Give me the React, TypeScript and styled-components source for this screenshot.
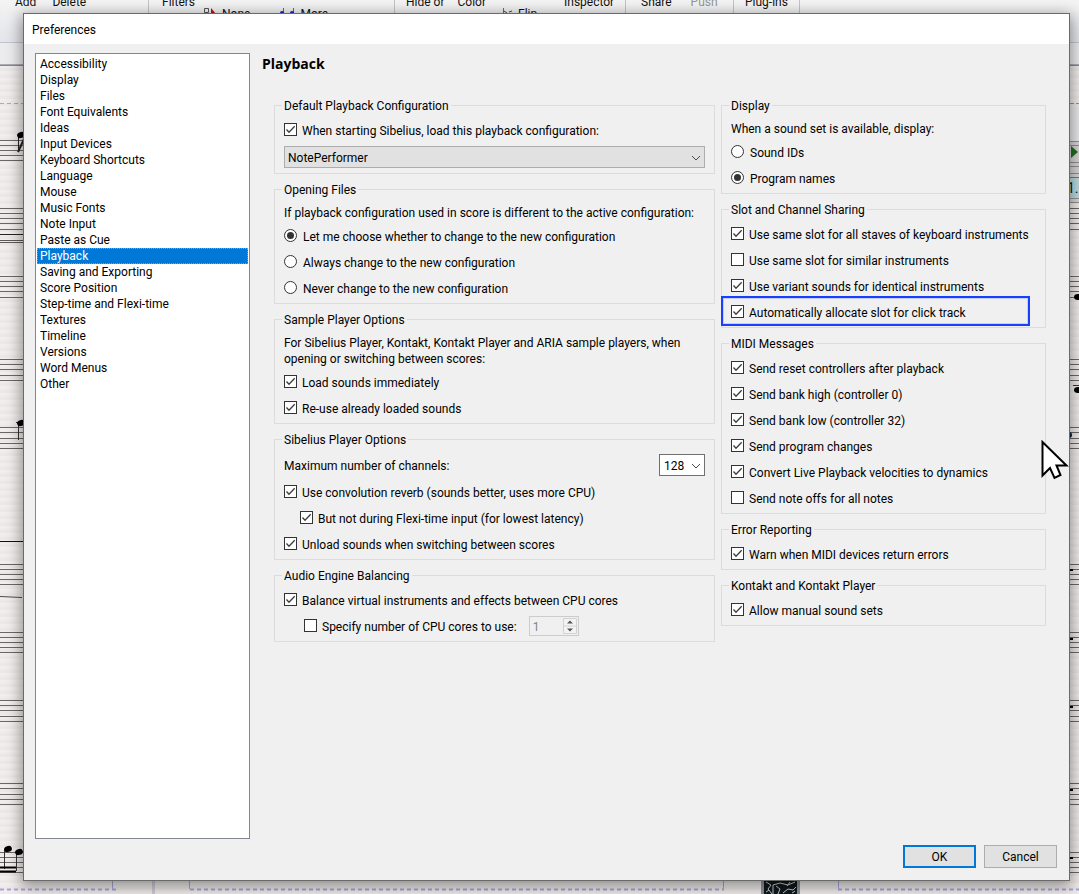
import React, { useId, useState } from 'react';
import styled, { createGlobalStyle, css } from 'styled-components';

const GlobalStyle = createGlobalStyle`
  *, *::before, *::after { box-sizing: border-box; }
  html, body { margin: 0; padding: 0; }
  body, button, input, select {
    font-family: Roboto, "Liberation Sans", sans-serif;
    font-size: 12px;
    line-height: 16px;
    color: #000;
  }
`;

/* ---------- Score window behind the dialog ---------- */

const Desktop = styled.div`
  position: relative;
  display: flex;
  min-height: 100vh;
  padding: 13px 9px 13px 23px;
  overflow: hidden;
`;

const ScoreWindow = styled.div`
  position: absolute;
  inset: 0;
  display: flex;
  flex-direction: column;
`;

const Ribbon = styled.div`
  display: flex;
  height: 43px;
  overflow: hidden;
  background: linear-gradient(#f4f4f4, #e4e5ea);
  border-bottom: 1px solid #c4c5cc;
`;

const RibbonGroup = styled.div<{ $width: number; $indent: number }>`
  flex: none;
  width: ${p => p.$width}px;
  padding-left: ${p => p.$indent}px;
  border-right: 1px solid #c3c3c6;
`;

const RibbonRow = styled.div<{ $gap: number; $indent?: number; $first?: boolean }>`
  display: flex;
  gap: ${p => p.$gap}px;
  padding-left: ${p => p.$indent ?? 0}px;
  margin-top: ${p => (p.$first ? -4 : 0)}px;
  height: 12px;
  line-height: 12px;
  white-space: nowrap;
`;

const RibbonItem = styled.span<{ $disabled?: boolean; $apart?: boolean }>`
  display: flex;
  gap: 5px;
  margin-left: ${p => (p.$apart ? 65 : 0)}px;
  color: ${p => (p.$disabled ? '#969696' : '#111')};
`;

const DocumentBar = styled.div`
  height: 22px;
  background: #ececee;
  border-bottom: 1px solid #aaaab4;
`;

const Paper = styled.div`
  position: relative;
  flex: 1;
  background: repeating-linear-gradient(#f0eceb 0 2px, #ece8e7 2px 5px, #f1eeed 5px 7px);
  border-top: 1px solid #8886a8;
`;

const PaperLayer = styled.svg<{ $side?: 'left' | 'right' }>`
  position: absolute;
  top: -66px;
  ${p => (p.$side === 'right' ? css`right: 0;` : css`left: 0;`)}
  width: ${p => (p.$side ? '30px' : '100%')};
  height: 894px;
`;

const STAVES = [
  [140, 145, 150, 155, 160],
  [208, 213, 218, 223, 229],
  [276, 281, 286, 291, 297],
  [359, 364, 369, 375, 380],
  [427, 432, 438, 443, 448],
  [564, 569, 574, 579, 584],
  [632, 637, 642, 647, 652],
  [700, 705, 710, 716, 721],
  [783, 788, 794, 799, 804],
  [852, 857, 862, 867, 872],
];

function Score() {
  return (
    <Paper aria-hidden="true">
      <PaperLayer>
        {STAVES.flat().map(y => (
          <rect key={y} x="0" y={y} width="100%" height="1" fill="#6a6867" />
        ))}
        <g stroke="#a6a6dc" strokeWidth="1" strokeDasharray="4 3" fill="none">
          <path d="M0 103.5H23" />
          <path d="M0 889.5H116" strokeWidth="2" />
          <path d="M190 889.5H724" strokeWidth="2" />
          <path d="M838 889.5H1100" strokeWidth="2" />
        </g>
        <path d="M112.500 881v8M189.500 881v8M723.500 881v8M838.500 881v8" stroke="#a6a6dc" />
        <rect x="152" y="880" width="3" height="14" fill="#cfcbd8" />
        <rect x="761" y="880" width="39" height="14" fill="#8d959a" />
        <rect x="764" y="880" width="33" height="14" fill="#10171b" />
        <path
          d="M766 882l5 3-3 4 4 5M773 894v-9l7-2 8 2 7-3M776 886l4 3-2 5M783 893l5-4 5 1 3-3M790 882l-3 4M766 892l3-2M792 893l3-2"
          fill="none"
          stroke="#c4ced2"
        />
      </PaperLayer>
      <PaperLayer $side="left">
        <path d="M0 234.500H24" stroke="#222" />
        <path d="M0 240.500H24M0 242.500H24" stroke="#5c5a59" />
        <path d="M18.500 136v15" stroke="#222" />
        <ellipse cx="21" cy="135" rx="4" ry="3" fill="#000" transform="rotate(-20 21 135)" />
        <path d="M18 152l6-13" stroke="#222" strokeWidth="2" />
        <path d="M18.500 423v17M16 422.500h8" stroke="#333" />
        <ellipse cx="21" cy="423" rx="4" ry="3" fill="#000" transform="rotate(-20 21 423)" />
        <path d="M0 541.500H24" stroke="#111" />
        <path d="M0 596.500L22 597.500" stroke="#4a4a48" />
        <path d="M4.500 850v19M16.500 853v18" stroke="#333" />
        <ellipse cx="8" cy="849" rx="4" ry="3" fill="#000" transform="rotate(-20 8 849)" />
        <ellipse cx="19" cy="852" rx="4" ry="3" fill="#000" transform="rotate(-20 19 852)" />
        <path d="M0 867.500H16M0 871.500H16" stroke="#000" strokeWidth="2" />
      </PaperLayer>
      <PaperLayer $side="right">
        <path d="M20 103.500h5M27 103.500h3" stroke="#8c8cc4" />
        <rect x="20" y="107" width="10" height="34" fill="#e9e9eb" />
        <rect x="20" y="141" width="10" height="62" fill="#d8d5d5" />
        <path d="M20 141.500h10M20 145.500h10M20 162.500h10M20 166.500h10M20 173.500h10M20 198.500h10M20 202.500h10" stroke="#929090" />
        <path d="M22 146l7 6-7 6z" fill="#22701f" />
        <rect x="20" y="178" width="10" height="19" fill="#bcdbe0" />
        <path d="M20 177.500h10" stroke="#777" />
        <text x="18" y="193" fontSize="14" fill="#111">1.</text>
        <ellipse cx="29" cy="297" rx="4" ry="3" fill="#000" />
        <path d="M24 385.500h6" stroke="#333" />
        <ellipse cx="29" cy="390" rx="4" ry="3" fill="#000" />
        <ellipse cx="20" cy="435" rx="3" ry="3" fill="#0d2748" />
        <path d="M20 570h4M20 639h4M20 707h4M20 790h4M20 858h4" stroke="#000" strokeWidth="2" />
      </PaperLayer>
    </Paper>
  );
}

function Background() {
  return (
    <ScoreWindow aria-hidden="true">
      <Ribbon>
        <RibbonGroup $width={149} $indent={15}>
          <RibbonRow $gap={16} $first>
            <RibbonItem>Add</RibbonItem>
            <RibbonItem>Delete</RibbonItem>
          </RibbonRow>
        </RibbonGroup>
        <RibbonGroup $width={246} $indent={13}>
          <RibbonRow $gap={0} $first>
            <RibbonItem>Filters</RibbonItem>
          </RibbonRow>
          <RibbonRow $gap={30} $indent={41}>
            <RibbonItem>
              <svg width="14" height="12">
                <path d="M1.500 .5h4v4h-4z" fill="none" stroke="#555" />
                <path d="M8 0l5 6H8z" fill="#b3151c" />
              </svg>
              None
            </RibbonItem>
            <RibbonItem>
              <svg width="15" height="12">
                <path d="M3.500 0v5M13.500 0v5" stroke="#7a5a9c" />
                <circle cx="2" cy="5" r="2" fill="#2020c8" />
                <circle cx="12" cy="5" r="2" fill="#2020c8" />
              </svg>
              More
            </RibbonItem>
          </RibbonRow>
        </RibbonGroup>
        <RibbonGroup $width={231} $indent={11}>
          <RibbonRow $gap={13} $first>
            <RibbonItem>Hide or</RibbonItem>
            <RibbonItem>Color</RibbonItem>
            <RibbonItem $apart>Inspector</RibbonItem>
          </RibbonRow>
          <RibbonRow $gap={0} $indent={96}>
            <RibbonItem>
              <svg width="11" height="12">
                <path d="M1.500 0v8" stroke="#7a5a9c" />
                <path d="M2 3l3 2M7 4l3-1" stroke="#444" />
              </svg>
              Flip
            </RibbonItem>
          </RibbonRow>
        </RibbonGroup>
        <RibbonGroup $width={108} $indent={15}>
          <RibbonRow $gap={19} $first>
            <RibbonItem>Share</RibbonItem>
            <RibbonItem $disabled>Push</RibbonItem>
          </RibbonRow>
        </RibbonGroup>
        <RibbonGroup $width={66} $indent={11}>
          <RibbonRow $gap={0} $first>
            <RibbonItem>Plug-ins</RibbonItem>
          </RibbonRow>
        </RibbonGroup>
      </Ribbon>
      <DocumentBar />
      <Score />
    </ScoreWindow>
  );
}

/* ---------- Dialog frame ---------- */

const Dialog = styled.section`
  position: relative;
  flex: 1;
  min-width: 0;
  display: flex;
  flex-direction: column;
  background: #f0f0f0;
  border: 1px solid #6a6a6a;
  box-shadow: 0 4px 14px 2px rgba(0, 0, 0, 0.4);
`;

const TitleBar = styled.header`
  height: 30px;
  padding: 0 8px;
  line-height: 32px;
  background: #fff;
`;

const DialogBody = styled.div`
  flex: 1;
  display: flex;
  gap: 12px;
  padding: 9px 23px 6px 11px;
`;

const CategoryList = styled.ul`
  flex: none;
  width: 215px;
  margin: 0;
  padding: 2px 1px;
  list-style: none;
  background: #fff;
  border: 1px solid #828790;
`;

const CategoryButton = styled.button<{ $selected: boolean }>`
  display: block;
  width: 100%;
  height: 16px;
  padding: 0 3px;
  border: 0;
  text-align: left;
  white-space: nowrap;
  background: ${p => (p.$selected ? '#0078d7' : 'transparent')};
  color: ${p => (p.$selected ? '#fff' : '#000')};
  outline: ${p => (p.$selected ? '1px dotted #e0873c' : 'none')};
  outline-offset: -1px;
`;

const Page = styled.main`
  flex: 1;
  min-width: 0;
`;

const PageTitle = styled.h1`
  margin: 0 0 23px;
  font-family: "Open Sans", sans-serif;
  font-size: 14px;
  line-height: 22px;
  font-weight: 700;
`;

const Columns = styled.div`
  display: grid;
  grid-template-columns: 441fr 325fr;
  gap: 6px;
  padding-left: 12px;
`;

const Column = styled.div`
  display: flex;
  flex-direction: column;
  gap: 8px;
  min-width: 0;
`;

const Footer = styled.footer`
  display: flex;
  justify-content: flex-end;
  gap: 8px;
  padding: 0 12px 12px;
`;

const DialogButton = styled.button<{ $primary?: boolean }>`
  width: 73px;
  height: 23px;
  padding: 0;
  background: #e1e1e1;
  border: ${p => (p.$primary ? '2px solid #0078d7' : '1px solid #adadad')};
`;

/* ---------- Form parts ---------- */

const Group = styled.fieldset<{ $bottom?: number }>`
  min-width: 0;
  margin: 0;
  padding: 0 9px ${p => p.$bottom ?? 1}px;
  border: 1px solid #dcdcdc;
`;

const GroupTitle = styled.legend`
  margin-left: -2px;
  padding: 0 2px;
  height: 15px;
  line-height: 17px;
`;

const GroupContent = styled.div`
  padding-top: 5px;
`;

const Note = styled.p`
  margin: 0;
  padding: 3px 0;
`;

const OptionRow = styled.div<{ $indent?: number; $highlight?: boolean }>`
  position: relative;
  display: flex;
  align-items: center;
  height: 26px;
  padding-left: ${p => p.$indent ?? 0}px;
  white-space: nowrap;

  ${p =>
    p.$highlight &&
    css`
      &::after {
        content: '';
        position: absolute;
        inset: -4px 6px 0 -10px;
        border: 2px solid #1a40ff;
        box-shadow: inset 0 0 0 1px #c4cefb;
        pointer-events: none;
      }
    `}
`;

const OptionLabel = styled.label<{ $gap: number }>`
  display: flex;
  align-items: center;
  gap: ${p => p.$gap}px;
`;

const Mark = styled.span`
  position: relative;
  width: 13px;
  height: 13px;
  margin-bottom: 3px;

  svg {
    position: absolute;
    inset: 0;
    pointer-events: none;
  }
`;

const Box = styled.input<{ $round?: boolean }>`
  appearance: none;
  display: block;
  width: 13px;
  height: 13px;
  margin: 0;
  background: #fff;
  border: 1px solid #333;
  border-radius: ${p => (p.$round ? '50%' : '0')};
`;

const SelectFrame = styled.span<{ $wide?: boolean }>`
  position: relative;
  display: block;
  width: ${p => (p.$wide ? 'auto' : '46px')};
  margin-top: ${p => (p.$wide ? '2px' : '0')};

  svg {
    position: absolute;
    right: 4px;
    top: 9px;
    pointer-events: none;
  }
`;

const Dropdown = styled.select<{ $wide?: boolean }>`
  appearance: none;
  display: block;
  width: 100%;
  height: 22px;
  padding: 2px ${p => (p.$wide ? 3 : 4)}px 0;
  border: 1px solid ${p => (p.$wide ? '#adadad' : '#707070')};
  border-radius: 0;
  background: ${p => (p.$wide ? '#e1e1e1' : '#fff')};
`;

const ChannelRow = styled.div`
  display: flex;
  align-items: center;
  justify-content: space-between;
  padding: 2px 0 4px;
  line-height: 18px;

  label { padding-top: 2px; }
`;

const Spinner = styled.span`
  display: flex;
  width: 50px;
  height: 20px;
  margin: 0 0 2px 12px;
  padding: 1px;
  border: 1px solid #cccccc;
`;

const SpinnerInput = styled.input`
  flex: 1;
  min-width: 0;
  padding: 2px 2px 0;
  border: 0;
  background: transparent;
  color: #838383;
`;

const Chevron = () => (
  <svg width="10" height="7" viewBox="0 0 10 7">
    <path d="M1 1l4 4 4-4" fill="none" stroke="#4a4a4a" />
  </svg>
);

interface CheckProps {
  label: string;
  on?: boolean;
  indent?: number;
  highlight?: boolean;
  children?: React.ReactNode;
}

function Check({ label, on = false, indent, highlight, children }: CheckProps) {
  const [checked, setChecked] = useState(on);
  return (
    <OptionRow $indent={indent} $highlight={highlight}>
      <OptionLabel $gap={5}>
        <Mark>
          <Box type="checkbox" checked={checked} onChange={e => setChecked(e.target.checked)} />
          {checked && (
            <svg width="13" height="13" viewBox="0 0 13 13">
              <path d="M2.500 6.500L5 9.200L10.700 3.300" fill="none" stroke="#3c3c3c" strokeWidth="1.300" />
            </svg>
          )}
        </Mark>
        {label}
      </OptionLabel>
      {children}
    </OptionRow>
  );
}

function RadioList({ options, initial }: { options: string[]; initial: number }) {
  const name = useId();
  const [value, setValue] = useState(initial);
  return (
    <>
      {options.map((label, i) => (
        <OptionRow key={label}>
          <OptionLabel $gap={6}>
            <Mark>
              <Box $round type="radio" name={name} checked={value === i} onChange={() => setValue(i)} />
              {value === i && (
                <svg width="13" height="13" viewBox="0 0 13 13">
                  <circle cx="6.500" cy="6.500" r="3.500" fill="#333" />
                </svg>
              )}
            </Mark>
            {label}
          </OptionLabel>
        </OptionRow>
      ))}
    </>
  );
}

function Section({ title, bottom, children }: { title: string; bottom?: number; children: React.ReactNode }) {
  return (
    <Group $bottom={bottom}>
      <GroupTitle>{title}</GroupTitle>
      <GroupContent>{children}</GroupContent>
    </Group>
  );
}

const Pointer = styled.svg`
  position: absolute;
  right: 0;
  top: 426px;
  width: 28px;
  height: 40px;
  pointer-events: none;
`;

const CATEGORIES = [
  'Accessibility',
  'Display',
  'Files',
  'Font Equivalents',
  'Ideas',
  'Input Devices',
  'Keyboard Shortcuts',
  'Language',
  'Mouse',
  'Music Fonts',
  'Note Input',
  'Paste as Cue',
  'Playback',
  'Saving and Exporting',
  'Score Position',
  'Step-time and Flexi-time',
  'Textures',
  'Timeline',
  'Versions',
  'Word Menus',
  'Other',
];

export default function App() {
  const [category, setCategory] = useState('Playback');

  return (
    <Desktop>
      <GlobalStyle />
      <Background />
      <Dialog role="dialog" aria-labelledby="dialog-title">
        <TitleBar id="dialog-title">Preferences</TitleBar>
        <DialogBody>
          <CategoryList>
            {CATEGORIES.map(name => (
              <li key={name}>
                <CategoryButton type="button" $selected={name === category} onClick={() => setCategory(name)}>
                  {name}
                </CategoryButton>
              </li>
            ))}
          </CategoryList>
          <Page>
            <PageTitle>Playback</PageTitle>
            <Columns>
              <Column>
                <Section title="Default Playback Configuration" bottom={5}>
                  <Check on label="When starting Sibelius, load this playback configuration:" />
                  <SelectFrame $wide>
                    <Dropdown $wide aria-label="Playback configuration">
                      <option>NotePerformer</option>
                    </Dropdown>
                    <Chevron />
                  </SelectFrame>
                </Section>
                <Section title="Opening Files">
                  <Note>If playback configuration used in score is different to the active configuration:</Note>
                  <RadioList
                    initial={0}
                    options={[
                      'Let me choose whether to change to the new configuration',
                      'Always change to the new configuration',
                      'Never change to the new configuration',
                    ]}
                  />
                </Section>
                <Section title="Sample Player Options">
                  <Note>
                    For Sibelius Player, Kontakt, Kontakt Player and ARIA sample players, when
                    <br />
                    opening or switching between scores:
                  </Note>
                  <Check on label="Load sounds immediately" />
                  <Check on label="Re-use already loaded sounds" />
                </Section>
                <Section title="Sibelius Player Options">
                  <ChannelRow>
                    <label htmlFor="channels">Maximum number of channels:</label>
                    <SelectFrame>
                      <Dropdown id="channels">
                        <option>128</option>
                      </Dropdown>
                      <Chevron />
                    </SelectFrame>
                  </ChannelRow>
                  <Check on label="Use convolution reverb (sounds better, uses more CPU)" />
                  <Check on indent={16} label="But not during Flexi-time input (for lowest latency)" />
                  <Check on label="Unload sounds when switching between scores" />
                </Section>
                <Section title="Audio Engine Balancing">
                  <Check on label="Balance virtual instruments and effects between CPU cores" />
                  <Check indent={20} label="Specify number of CPU cores to use:">
                    <Spinner>
                      <SpinnerInput disabled defaultValue="1" aria-label="Number of CPU cores" />
                      <svg width="14" height="16" viewBox="0 0 14 16">
                        <path d="M.5 .5h13v15H.5zM.5 8h13" fill="#f3f3f3" stroke="#d2d2d2" />
                        <path d="M7 2.500l3 3H4zM7 13.500l3-3H4z" fill="#555" />
                      </svg>
                    </Spinner>
                  </Check>
                </Section>
              </Column>
              <Column>
                <Section title="Display">
                  <Note>When a sound set is available, display:</Note>
                  <RadioList initial={1} options={['Sound IDs', 'Program names']} />
                </Section>
                <Section title="Slot and Channel Sharing">
                  <Check on label="Use same slot for all staves of keyboard instruments" />
                  <Check label="Use same slot for similar instruments" />
                  <Check on label="Use variant sounds for identical instruments" />
                  <Check on highlight label="Automatically allocate slot for click track" />
                </Section>
                <Section title="MIDI Messages">
                  <Check on label="Send reset controllers after playback" />
                  <Check on label="Send bank high (controller 0)" />
                  <Check on label="Send bank low (controller 32)" />
                  <Check on label="Send program changes" />
                  <Check on label="Convert Live Playback velocities to dynamics" />
                  <Check label="Send note offs for all notes" />
                </Section>
                <Section title="Error Reporting">
                  <Check on label="Warn when MIDI devices return errors" />
                </Section>
                <Section title="Kontakt and Kontakt Player">
                  <Check on label="Allow manual sound sets" />
                </Section>
              </Column>
            </Columns>
          </Page>
        </DialogBody>
        <Footer>
          <DialogButton type="button" $primary>OK</DialogButton>
          <DialogButton type="button">Cancel</DialogButton>
        </Footer>
        <Pointer viewBox="0 0 28 40" aria-hidden="true">
          <path
            d="M1.500 2V35.500L9 28L13.500 38L19.500 35L15.500 25.500H25.500Z"
            fill="#fff"
            stroke="#000"
            strokeWidth="2"
          />
        </Pointer>
      </Dialog>
    </Desktop>
  );
}
